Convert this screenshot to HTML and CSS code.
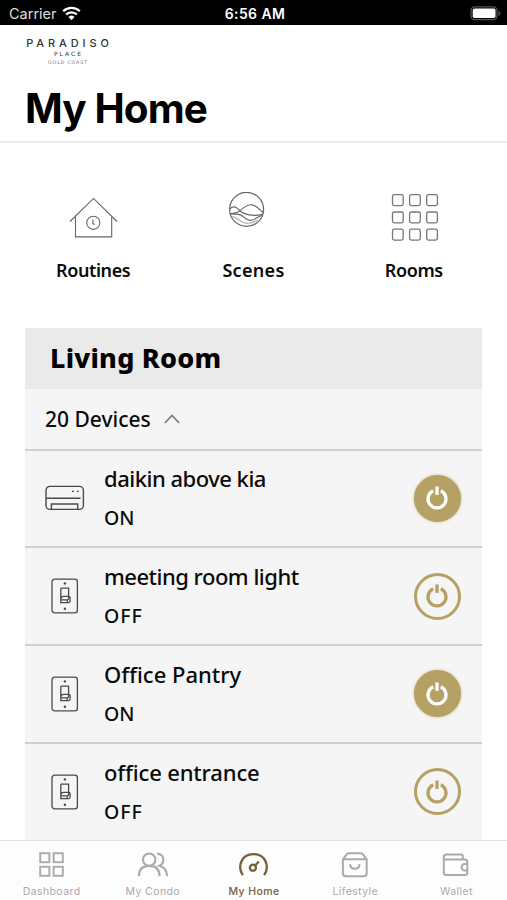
FILE: index.html
```html
<!DOCTYPE html>
<html lang="en">
<head>
  <meta charset="UTF-8" />
  <meta name="viewport" content="width=device-width, initial-scale=1.0" />
  <title>My Home | Paradiso Place</title>
  <link rel="stylesheet" href="styles.css">
</head>
<body>
  <!-- Shared icons -->
  <svg class="sprite" width="0" height="0">
    <symbol id="power" viewBox="0 0 24 24">
      <path d="M8.2 4.8A9 9 0 1 0 15.8 4.8" fill="none" stroke="currentColor" stroke-width="3.3" />
      <path d="M12 .5v8.4" fill="none" stroke="currentColor" stroke-width="3.3" />
    </symbol>
    <symbol id="switch" viewBox="0 0 28 36">
      <g fill="none" stroke="currentColor" stroke-width="1.3">
        <rect x="1" y="1.2" width="25.4" height="33.6" rx="2.6" />
        <path d="M9.8 10.2h7.8v8M9.8 10.2v14.4h8c1 0 1.3-.7 1.3-1.5v-3.3c0-.9-.5-1.4-1.3-1.4h-5c-1.4 0-3 1-3 2.5M9.8 21.8h6.4c.8 0 1.4-.6 1.4-1.3v-2M16.2 22v2.4" />
      </g>
      <circle cx="13.9" cy="5.4" r="1.2" fill="currentColor" />
      <circle cx="13.9" cy="30.8" r="1.2" fill="currentColor" />
    </symbol>
  </svg>

  <div class="status-bar">
    <div class="carrier">
      <span>Carrier</span>
      <svg width="19" height="15" viewBox="0 0 19 15" fill="none" stroke="#fff" stroke-width="2.3">
        <path d="M1.2 5.2a11.8 11.8 0 0 1 16.6 0" />
        <path d="M4.1 8.5a7.7 7.7 0 0 1 10.8 0" />
        <path d="M9.5 14.2L6.5 11a4.3 4.3 0 0 1 6 0z" fill="#fff" stroke="none" />
      </svg>
    </div>
    <span class="time">6:56 AM</span>
    <svg class="battery" width="31" height="15" viewBox="0 0 31 15">
      <rect x="1" y=".9" width="26" height="12.8" rx="3.6" fill="none" stroke="#555" stroke-width="1.3" />
      <rect x="2.7" y="2.6" width="22.8" height="9.4" rx="1.8" fill="#fff" />
      <path d="M28.5 5v4.8c1.4-.5 1.8-1.4 1.8-2.4s-.4-1.9-1.8-2.4z" fill="#555" />
    </svg>
  </div>

  <header>
    <div class="logo">
      <span class="logo-name">PARADISO</span>
      <span class="logo-place">PLACE</span>
      <span class="logo-city">GOLD COAST</span>
    </div>
    <h1>My Home</h1>
  </header>

  <main>
    <div class="shortcuts">
      <a class="shortcut">
        <svg width="50" height="50" viewBox="0 0 50 50" fill="none" stroke="#666" stroke-width="1.1">
          <path d="M2 29.5L25.5 6.4l23.5 23.1" />
          <path d="M7.5 25v19.9h36.2V25" />
          <circle cx="25.3" cy="30.8" r="6.6" />
          <path d="M24.9 27.6v4l1.8.9" />
        </svg>
        <span class="tight">Routines</span>
      </a>
      <a class="shortcut">
        <svg width="50" height="50" viewBox="0 0 50 50" fill="none" stroke="#666" stroke-width="1.2">
          <circle cx="18.6" cy="17.4" r="17" />
          <path d="M1.9 16.9c2-2.600 4.800-2.700 7.200-.8 2.300 1.800 3.600 3.800 6.400 5 5.500 2.300 12.500 2.900 19.200 1.200" />
          <path d="M2.300 21.600c4 .4 7-.6 10-3.200 4.200-3.700 7.800-6 11.600-5.600 4.800.5 7.600 4.900 11.400 7.900" />
          <path d="M2.300 21.800c4.200.2 8.200-.4 11.700 1.900 2.800 1.800 4 4.300 7.600 4.700 5.400.6 7.400-4.400 13.100-5.100" />
          <path d="M3.600 24.600c4 0 6.400 2.400 9.400 4.800 3.600 2.800 10.600 2.600 16.800-1.400" stroke-opacity=".5" />
        </svg>
        <span class="wide">Scenes</span>
      </a>
      <a class="shortcut">
        <svg width="50" height="50" viewBox="0 0 50 50" fill="none" stroke="#777" stroke-width="1.3">
          <rect x="3.5" y="2.7" width="10.7" height="10.9" rx="1.8" />
          <rect x="20.6" y="2.7" width="10.7" height="10.9" rx="1.8" />
          <rect x="37.7" y="2.7" width="10.7" height="10.9" rx="1.8" />
          <rect x="3.5" y="20" width="10.7" height="10.9" rx="1.8" />
          <rect x="20.6" y="20" width="10.7" height="10.9" rx="1.8" />
          <rect x="37.7" y="20" width="10.7" height="10.9" rx="1.8" />
          <rect x="3.5" y="37.2" width="10.7" height="10.9" rx="1.8" />
          <rect x="20.6" y="37.2" width="10.7" height="10.9" rx="1.8" />
          <rect x="37.7" y="37.2" width="10.7" height="10.9" rx="1.8" />
        </svg>
        <span class="tight">Rooms</span>
      </a>
    </div>

    <section class="room">
      <h2>Living Room</h2>
      <div class="device-count">
        <span>20 Devices</span>
        <svg width="16" height="10" viewBox="0 0 16 10" fill="none" stroke="#777" stroke-width="1.6">
          <path d="M.8 9L8 1.5 15.2 9" />
        </svg>
      </div>

      <div class="device">
        <div class="device-icon">
          <svg width="40" height="26" viewBox="0 0 40 26" fill="none" stroke="#4a4a4a" stroke-width="1.4">
            <rect x="1" y="1.4" width="37.4" height="23" rx="4" />
            <path d="M1 13.2h34.5M6.4 24v-5h26.3v5" />
            <path d="M27 6.4h1.9M31.8 6.4h1.9" />
          </svg>
        </div>
        <div class="device-info">
          <h3 class="tight">daikin above kia</h3>
          <p>ON</p>
        </div>
        <button class="power on"><svg width="24" height="24"><use href="#power" /></svg></button>
      </div>

      <div class="device">
        <div class="device-icon"><svg width="28" height="36"><use href="#switch" /></svg></div>
        <div class="device-info">
          <h3 class="tight">meeting room light</h3>
          <p class="wide">OFF</p>
        </div>
        <button class="power"><svg width="24" height="24"><use href="#power" /></svg></button>
      </div>

      <div class="device">
        <div class="device-icon"><svg width="28" height="36"><use href="#switch" /></svg></div>
        <div class="device-info">
          <h3>Office Pantry</h3>
          <p>ON</p>
        </div>
        <button class="power on"><svg width="24" height="24"><use href="#power" /></svg></button>
      </div>

      <div class="device">
        <div class="device-icon"><svg width="28" height="36"><use href="#switch" /></svg></div>
        <div class="device-info">
          <h3 class="entrance">office entrance</h3>
          <p class="wide">OFF</p>
        </div>
        <button class="power"><svg width="24" height="24"><use href="#power" /></svg></button>
      </div>
    </section>
  </main>

  <nav>
    <a class="tab">
      <svg width="32" height="28" viewBox="0 0 32 28" fill="none" stroke="currentColor" stroke-width="1.9">
        <rect x="4.2" y="2.2" width="9.2" height="9" />
        <rect x="17.6" y="2.2" width="9.2" height="9" />
        <rect x="4.2" y="15.8" width="9.2" height="9" />
        <rect x="17.6" y="15.8" width="9.2" height="9" />
      </svg>
      <span>Dashboard</span>
    </a>
    <a class="tab">
      <svg width="32" height="28" viewBox="0 0 32 28" fill="none" stroke="currentColor" stroke-width="2.1">
        <circle cx="12.2" cy="8.7" r="6.2" />
        <path d="M1.8 25.1c.2-6.4 4-10.2 10.4-10.2s10.2 3.8 10.4 10.2" />
        <path d="M20.1 2.6c4.3.3 6.500 3.100 6.300 6.500-.2 2.900-1.600 4.700-3.900 5.700 5 1.300 7.300 5.100 7.600 10.300" />
      </svg>
      <span>My Condo</span>
    </a>
    <a class="tab active">
      <svg width="32" height="28" viewBox="0 0 32 28" fill="none" stroke="currentColor" stroke-width="2.3">
        <path d="M4.9 24.2C-.7 16.2 2.700 3.200 15.500 3.200s16.200 13 10.600 21" />
        <circle cx="14.9" cy="16.700" r="3" />
        <path d="M17.100 14.500l3.800-4" />
      </svg>
      <span>My Home</span>
    </a>
    <a class="tab">
      <svg width="32" height="28" viewBox="0 0 32 28" fill="none" stroke="currentColor" stroke-width="2" stroke-linejoin="round">
        <path d="M3.900 8.3h23.800v14.2c0 1.7-1 2.7-2.7 2.7H6.600c-1.700 0-2.700-1-2.700-2.700V8.300l4-5.200c.5-.6 1-.9 1.800-.9h12.200c.8 0 1.300.3 1.800.9l4 5.200" />
        <path d="M11.100 13.100c.4 6.200 9 6.200 9.400 0" />
      </svg>
      <span>Lifestyle</span>
    </a>
    <a class="tab">
      <svg width="32" height="28" viewBox="0 0 32 28" fill="none" stroke="currentColor" stroke-width="2" stroke-linejoin="round">
        <path d="M22.700 8.500V5.100c0-1-.7-1.700-1.700-1.700H6.300c-1.500 0-2.500 1-2.500 2.500v15.600c0 1.500 1 2.600 2.500 2.600h18.500c1.500 0 2.500-1 2.500-2.500V11c0-1.500-1-2.500-2.500-2.500H4.500" />
        <path d="M27.300 13h-2.600a3.200 3.200 0 0 0 0 6.400h2.600" />
      </svg>
      <span>Wallet</span>
    </a>
  </nav>
</body>
</html>
```
FILE: styles.css
```css
* {
  box-sizing: border-box;
}

body {
  margin: 0;
  height: 900px;
  display: flex;
  flex-direction: column;
  overflow: hidden;
  background: #fff;
  color: #0b0b0b;
  font-family: "Noto Sans", sans-serif;
}

h1, h2, h3, p {
  margin: 0;
}

.sprite {
  position: absolute;
}

.status-bar {
  display: grid;
  grid-template-columns: 1fr auto 1fr;
  align-items: center;
  height: 25px;
  flex: none;
  padding: 2px 6px 0 9px;
  background: #000;
  color: #fff;
  font: 400 14.5px/20px Inter, sans-serif;
}

.carrier {
  display: flex;
  gap: 5px;
  color: #ddd;
}

.carrier svg {
  margin-top: 2px;
}

.time {
  font-size: 14px;
  font-weight: 600;
  letter-spacing: 0.4px;
}

.battery {
  justify-self: end;
}

header {
  flex: none;
  height: 118px;
  padding: 13px 25px 0;
  border-bottom: 2px solid #ebebeb;
}

.logo {
  display: flex;
  flex-direction: column;
  align-items: center;
  width: 85px;
  color: #333;
  font-family: "DejaVu Sans", sans-serif;
}

.logo-name {
  font-family: Inter, sans-serif;
  font-size: 11px;
  line-height: 11px;
  font-weight: 500;
  letter-spacing: 3.9px;
  margin-right: -3.9px;
}

.logo-place {
  font-size: 6px;
  line-height: 10px;
  letter-spacing: 2px;
  margin-right: -2px;
}

.logo-city {
  font-size: 4.8px;
  line-height: 8px;
  letter-spacing: 0.8px;
  margin-right: -0.8px;
  color: #777;
}

h1 {
  margin-top: 17px;
  font: 700 40.5px/50px Inter, sans-serif;
  letter-spacing: -0.9px;
  color: #000;
}

main {
  flex: 1;
  min-height: 0;
  overflow: hidden;
  padding-top: 49px;
}

.shortcuts {
  display: grid;
  grid-template-columns: repeat(3, 1fr);
  padding: 0 13px;
}

.shortcut {
  display: flex;
  flex-direction: column;
  align-items: center;
  gap: 15px;
  font-size: 18px;
  font-weight: 600;
  line-height: 26px;
}

.tight {
  letter-spacing: -0.4px;
}

.wide {
  letter-spacing: 0.3px;
}

.room {
  margin: 44.5px 25px 0;
  background: #f5f5f5;
}

.room h2 {
  height: 61px;
  padding-left: 25px;
  background: #eaeaea;
  font-size: 27px;
  font-weight: 800;
  line-height: 60px;
  letter-spacing: 0.25px;
  color: #000;
}

.device-count {
  display: flex;
  align-items: center;
  gap: 13px;
  height: 60px;
  padding: 1px 0 0 20px;
  font-size: 21px;
  font-weight: 500;
}

.device {
  display: flex;
  align-items: center;
  height: 97.8px;
  padding: 0 21.5px 0 19px;
  border-top: 2px solid #d0d0d0;
}

.device-icon {
  display: flex;
  justify-content: center;
  width: 41px;
  color: #4a4a4a;
}

.device-info {
  flex: 1;
  margin-left: 19px;
  font-weight: 500;
}

.device-info h3 {
  font-size: 22px;
  font-weight: 500;
  line-height: 39px;
}

.device-info h3.tight {
  letter-spacing: -0.5px;
}

.device-info h3.entrance {
  letter-spacing: -0.15px;
}

.device-info p {
  font-size: 19.5px;
  line-height: 39px;
}

.device-info p.wide {
  letter-spacing: 1px;
}

.power {
  display: flex;
  align-items: center;
  justify-content: center;
  width: 47px;
  height: 47px;
  padding: 0;
  border: 3px solid #b5a163;
  border-radius: 50%;
  background: none;
  color: #b5a163;
}

.power.on {
  background: #b5a163;
  color: #fff;
  box-shadow: 0 0 3px #c9b988;
}

nav {
  display: grid;
  grid-template-columns: repeat(5, 1fr);
  flex: none;
  height: 60px;
  padding: 10px 0 0 1px;
  border-top: 1px solid #e0e0e0;
  background: #fdfdfd;
}

.tab {
  display: flex;
  flex-direction: column;
  align-items: center;
  gap: 5px;
  color: #aaa;
  font: 400 10.5px/15px Inter, sans-serif;
  letter-spacing: 0.4px;
}

.tab.active {
  color: #75603a;
  font-weight: 500;
}
```
